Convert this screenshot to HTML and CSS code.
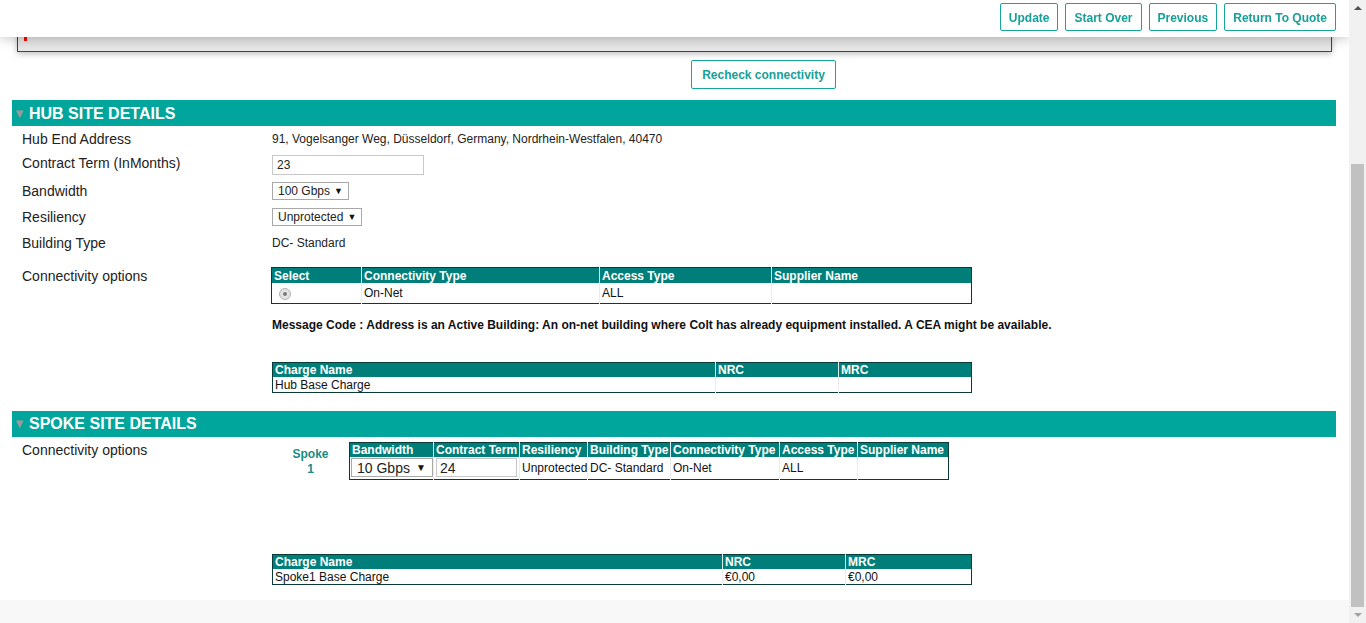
FILE: index.html
```html
<!DOCTYPE html>
<html lang="en">
<head>
<meta charset="utf-8">
<title>Site Details</title>
<link rel="stylesheet" href="styles.css">
</head>
<body>
<div class="page">
  <header class="topbar">
    <button class="btn">Update</button>
    <button class="btn">Start Over</button>
    <button class="btn">Previous</button>
    <button class="btn">Return To Quote</button>
  </header>

  <main class="content">
    <div class="msgbox"><span class="redmark"></span></div>

    <div class="recheck-row"><button class="btn btn-recheck">Recheck connectivity</button></div>

    <div class="section-bar"><span class="tri">▼</span>HUB SITE DETAILS</div>
    <div class="section-body">
      <div class="row r1"><div class="label">Hub End Address</div><div class="value">91, Vogelsanger Weg, Düsseldorf, Germany, Nordrhein-Westfalen, 40470</div></div>
      <div class="row r2"><div class="label">Contract Term (InMonths)</div><div class="value"><input class="textbox tb-hub" type="text" value="23"></div></div>
      <div class="row r3"><div class="label">Bandwidth</div><div class="value"><span class="sel sel-bw">100 Gbps<span class="arr">▼</span></span></div></div>
      <div class="row r3"><div class="label">Resiliency</div><div class="value"><span class="sel sel-res">Unprotected<span class="arr">▼</span></span></div></div>
      <div class="row r3"><div class="label">Building Type</div><div class="value">DC- Standard</div></div>
      <div class="row conn">
        <div class="label label-top">Connectivity options</div>
        <div class="value-col">
          <table class="grid t-conn">
            <colgroup><col style="width:90px"><col style="width:238px"><col style="width:172px"><col style="width:200px"></colgroup>
            <tr class="hd"><th>Select</th><th>Connectivity Type</th><th>Access Type</th><th>Supplier Name</th></tr>
            <tr class="bd"><td><span class="radio"><span class="dot"></span></span></td><td>On-Net</td><td>ALL</td><td></td></tr>
          </table>
          <p class="message">Message Code : Address is an Active Building: An on-net building where Colt has already equipment installed. A CEA might be available.</p>
          <table class="grid t-charge">
            <colgroup><col style="width:443px"><col style="width:123px"><col style="width:133px"></colgroup>
            <tr class="hd sm"><th>Charge Name</th><th>NRC</th><th>MRC</th></tr>
            <tr class="bd sm"><td>Hub Base Charge</td><td></td><td></td></tr>
          </table>
        </div>
      </div>
    </div>

    <div class="section-bar spoke-bar"><span class="tri">▼</span>SPOKE SITE DETAILS</div>
    <div class="section-body">
      <div class="row spoke-row">
        <div class="label label-spoke">Connectivity options</div>
        <div class="spoke-name">Spoke<br>1</div>
        <table class="grid t-spoke">
          <colgroup><col style="width:84px"><col style="width:86px"><col style="width:68px"><col style="width:83px"><col style="width:109px"><col style="width:78px"><col style="width:91px"></colgroup>
          <tr class="hd sm"><th>Bandwidth</th><th>Contract Term</th><th>Resiliency</th><th>Building Type</th><th>Connectivity Type</th><th>Access Type</th><th>Supplier Name</th></tr>
          <tr class="bd tall"><td class="nopad"><span class="sel sel-spoke">10 Gbps<span class="arr">▼</span></span></td><td class="nopad"><input class="textbox tb-spoke" type="text" value="24"></td><td>Unprotected</td><td>DC- Standard</td><td>On-Net</td><td>ALL</td><td></td></tr>
        </table>
      </div>
      <div class="spoke-charge">
        <table class="grid t-charge">
          <colgroup><col style="width:450px"><col style="width:123px"><col style="width:126px"></colgroup>
          <tr class="hd sm"><th>Charge Name</th><th>NRC</th><th>MRC</th></tr>
          <tr class="bd sm"><td>Spoke1 Base Charge</td><td>€0,00</td><td>€0,00</td></tr>
        </table>
      </div>
    </div>
  </main>
  <footer class="footer"></footer>
</div>

<div class="scrollbar">
  <span class="sb-up"></span>
  <span class="sb-thumb"></span>
  <span class="sb-down"></span>
</div>
</body>
</html>
```

FILE: styles.css
```css
* { box-sizing: border-box; }
html, body { margin: 0; padding: 0; overflow: hidden; height: 100%; }
body {
  font-family: "Liberation Sans", Arial, sans-serif;
  font-size: 12px;
  color: #222;
  background: #fff;
}
.page {
  width: 1349px;
  position: relative;
}
.topbar {
  position: fixed;
  top: 0;
  left: 0;
  width: 1349px;
  height: 37px;
  background: #fff;
  z-index: 10;
  display: flex;
  justify-content: flex-end;
  align-items: flex-start;
  gap: 7px;
  padding: 3px 13px 0 0;
  box-shadow: 0 2px 12px rgba(0,0,0,0.22);
}
.btn {
  font-family: "Liberation Sans", Arial, sans-serif;
  font-weight: bold;
  font-size: 12px;
  color: #17a098;
  background: #fff;
  border: 1px solid #17a49c;
  border-radius: 2px;
  height: 28px;
  padding: 1px 8px 0;
  cursor: pointer;
}
.content {
  padding-top: 20px;
}
.msgbox {
  margin: 0 17px;
  height: 32px;
  background: linear-gradient(#dcdcdc, #e7e7e7);
  border: 1px solid #444;
  box-shadow: 0 2px 6px rgba(0,0,0,0.25);
  position: relative;
}
.redmark {
  position: absolute;
  left: 6px;
  top: 15px;
  width: 3px;
  height: 5px;
  background: #f00;
}
.recheck-row {
  margin-top: 8px;
  padding-left: 691px;
  height: 29px;
}
.btn-recheck {
  height: 29px;
  width: 145px;
  padding: 0;
}
.section-bar {
  margin: 11px 13px 0 12px;
  height: 26px;
  background: #00a69b;
  color: #fff;
  font-weight: bold;
  font-size: 16px;
  line-height: 26px;
  display: flex;
  align-items: center;
  padding-top: 1px;
}
.tri {
  color: #9a9a9a;
  font-size: 13px;
  width: 17px;
  padding-left: 1px;
}
.spoke-bar { margin-top: 18px; }
.section-body {
  padding-left: 22px;
}
.row {
  display: flex;
  align-items: center;
}
.label {
  width: 250px;
  font-size: 14px;
  color: #222;
  flex: none;
}
.value { font-size: 12px; }
.r1 { height: 25px; }
.r2 { height: 27px; }
.r2 .label { margin-top: -3px; }
.r3 { height: 26px; }
.conn {
  align-items: flex-start;
  margin-top: 11px;
}
.label-top { line-height: 18px; }
.value-col { margin-left: -1px; }
.textbox {
  font-family: "Liberation Sans", Arial, sans-serif;
  border: 1px solid #c8c8c8;
  padding: 0 4px;
  color: #222;
  margin: 0;
  outline: none;
}
.tb-hub { width: 152px; height: 20px; font-size: 12px; }
.tb-spoke { width: 81px; height: 19px; font-size: 14px; margin-left: 2px; padding: 0 3px; }
.sel {
  display: inline-flex;
  align-items: center;
  justify-content: space-between;
  border: 1px solid #a9a9a9;
  background: #fff;
  color: #222;
  padding: 0 5px;
}
.arr { font-size: 9px; color: #111; margin-left: 4px; }
.sel-bw { width: 77px; height: 18px; font-size: 12px; }
.sel-res { width: 90px; height: 18px; font-size: 12px; }
.sel-spoke { width: 82px; height: 19px; font-size: 14px; margin-left: 1px; }
.sel-spoke .arr { font-size: 10px; margin-right: 1px; }

table.grid {
  border-collapse: collapse;
  table-layout: fixed;
  border: 1px solid #0b3b38;
  font-size: 12px;
}
.t-conn { width: 700px; }
.t-charge { width: 699px; }
.t-spoke { width: 599px; }
.grid th {
  background: #007f7a;
  color: #fff;
  font-weight: bold;
  text-align: left;
  padding: 1px 2px 0;
  border-left: 1px solid #d9eeec;
  white-space: nowrap;
  overflow: hidden;
  height: 15px;
  line-height: 14px;
}
.grid th:first-child, .grid td:first-child { border-left: none; }
.grid td {
  padding: 1px 2px 0;
  border-left: 1px solid #ececec;
  white-space: nowrap;
  overflow: hidden;
  height: 20px;
  line-height: 14px;
  color: #111;
}
.grid tr.sm th { height: 14px; padding-top: 0; }
.grid tr.sm td { height: 15px; }
.grid tr.tall td { height: 23px; }
.grid td.nopad { padding: 0; }
.radio {
  display: inline-block;
  width: 12px;
  height: 12px;
  border-radius: 50%;
  border: 1px solid #b5b5b5;
  background: radial-gradient(#eee, #d8d8d8);
  margin-left: 5px;
  vertical-align: middle;
  position: relative;
}
.dot {
  position: absolute;
  left: 3px;
  top: 3px;
  width: 4px;
  height: 4px;
  border-radius: 50%;
  background: #7a7a7a;
}
.message {
  margin: 14px 0 0 1px;
  font-weight: bold;
  font-size: 12px;
  line-height: 15px;
  color: #111;
}
.t-conn + .message + .t-charge { margin-top: 29px; margin-left: 1px; }
.spoke-row {
  align-items: flex-start;
  margin-top: 5px;
}
.label-spoke { line-height: 16px; }
.spoke-name {
  width: 77px;
  flex: none;
  text-align: center;
  color: #1a8a85;
  font-weight: bold;
  font-size: 12px;
  line-height: 15px;
  margin-top: 5px;
}
.spoke-charge {
  margin: 74px 0 0 250px;
}
.footer {
  margin-top: 15px;
  height: 40px;
  background: #f8f8f8;
}
.scrollbar {
  position: fixed;
  top: 0;
  right: 0;
  width: 17px;
  height: 623px;
  background: #f1f1f1;
  z-index: 20;
}
.sb-thumb {
  position: absolute;
  left: 2px;
  top: 164px;
  width: 13px;
  height: 443px;
  background: #c1c1c1;
}
.sb-up {
  position: absolute;
  left: 5px;
  top: 6px;
  width: 0;
  height: 0;
  border-left: 4px solid transparent;
  border-right: 4px solid transparent;
  border-bottom: 4px solid #505050;
}
.sb-down {
  position: absolute;
  left: 5px;
  top: 613px;
  width: 0;
  height: 0;
  border-left: 4px solid transparent;
  border-right: 4px solid transparent;
  border-top: 4px solid #a3a3a3;
}
```
